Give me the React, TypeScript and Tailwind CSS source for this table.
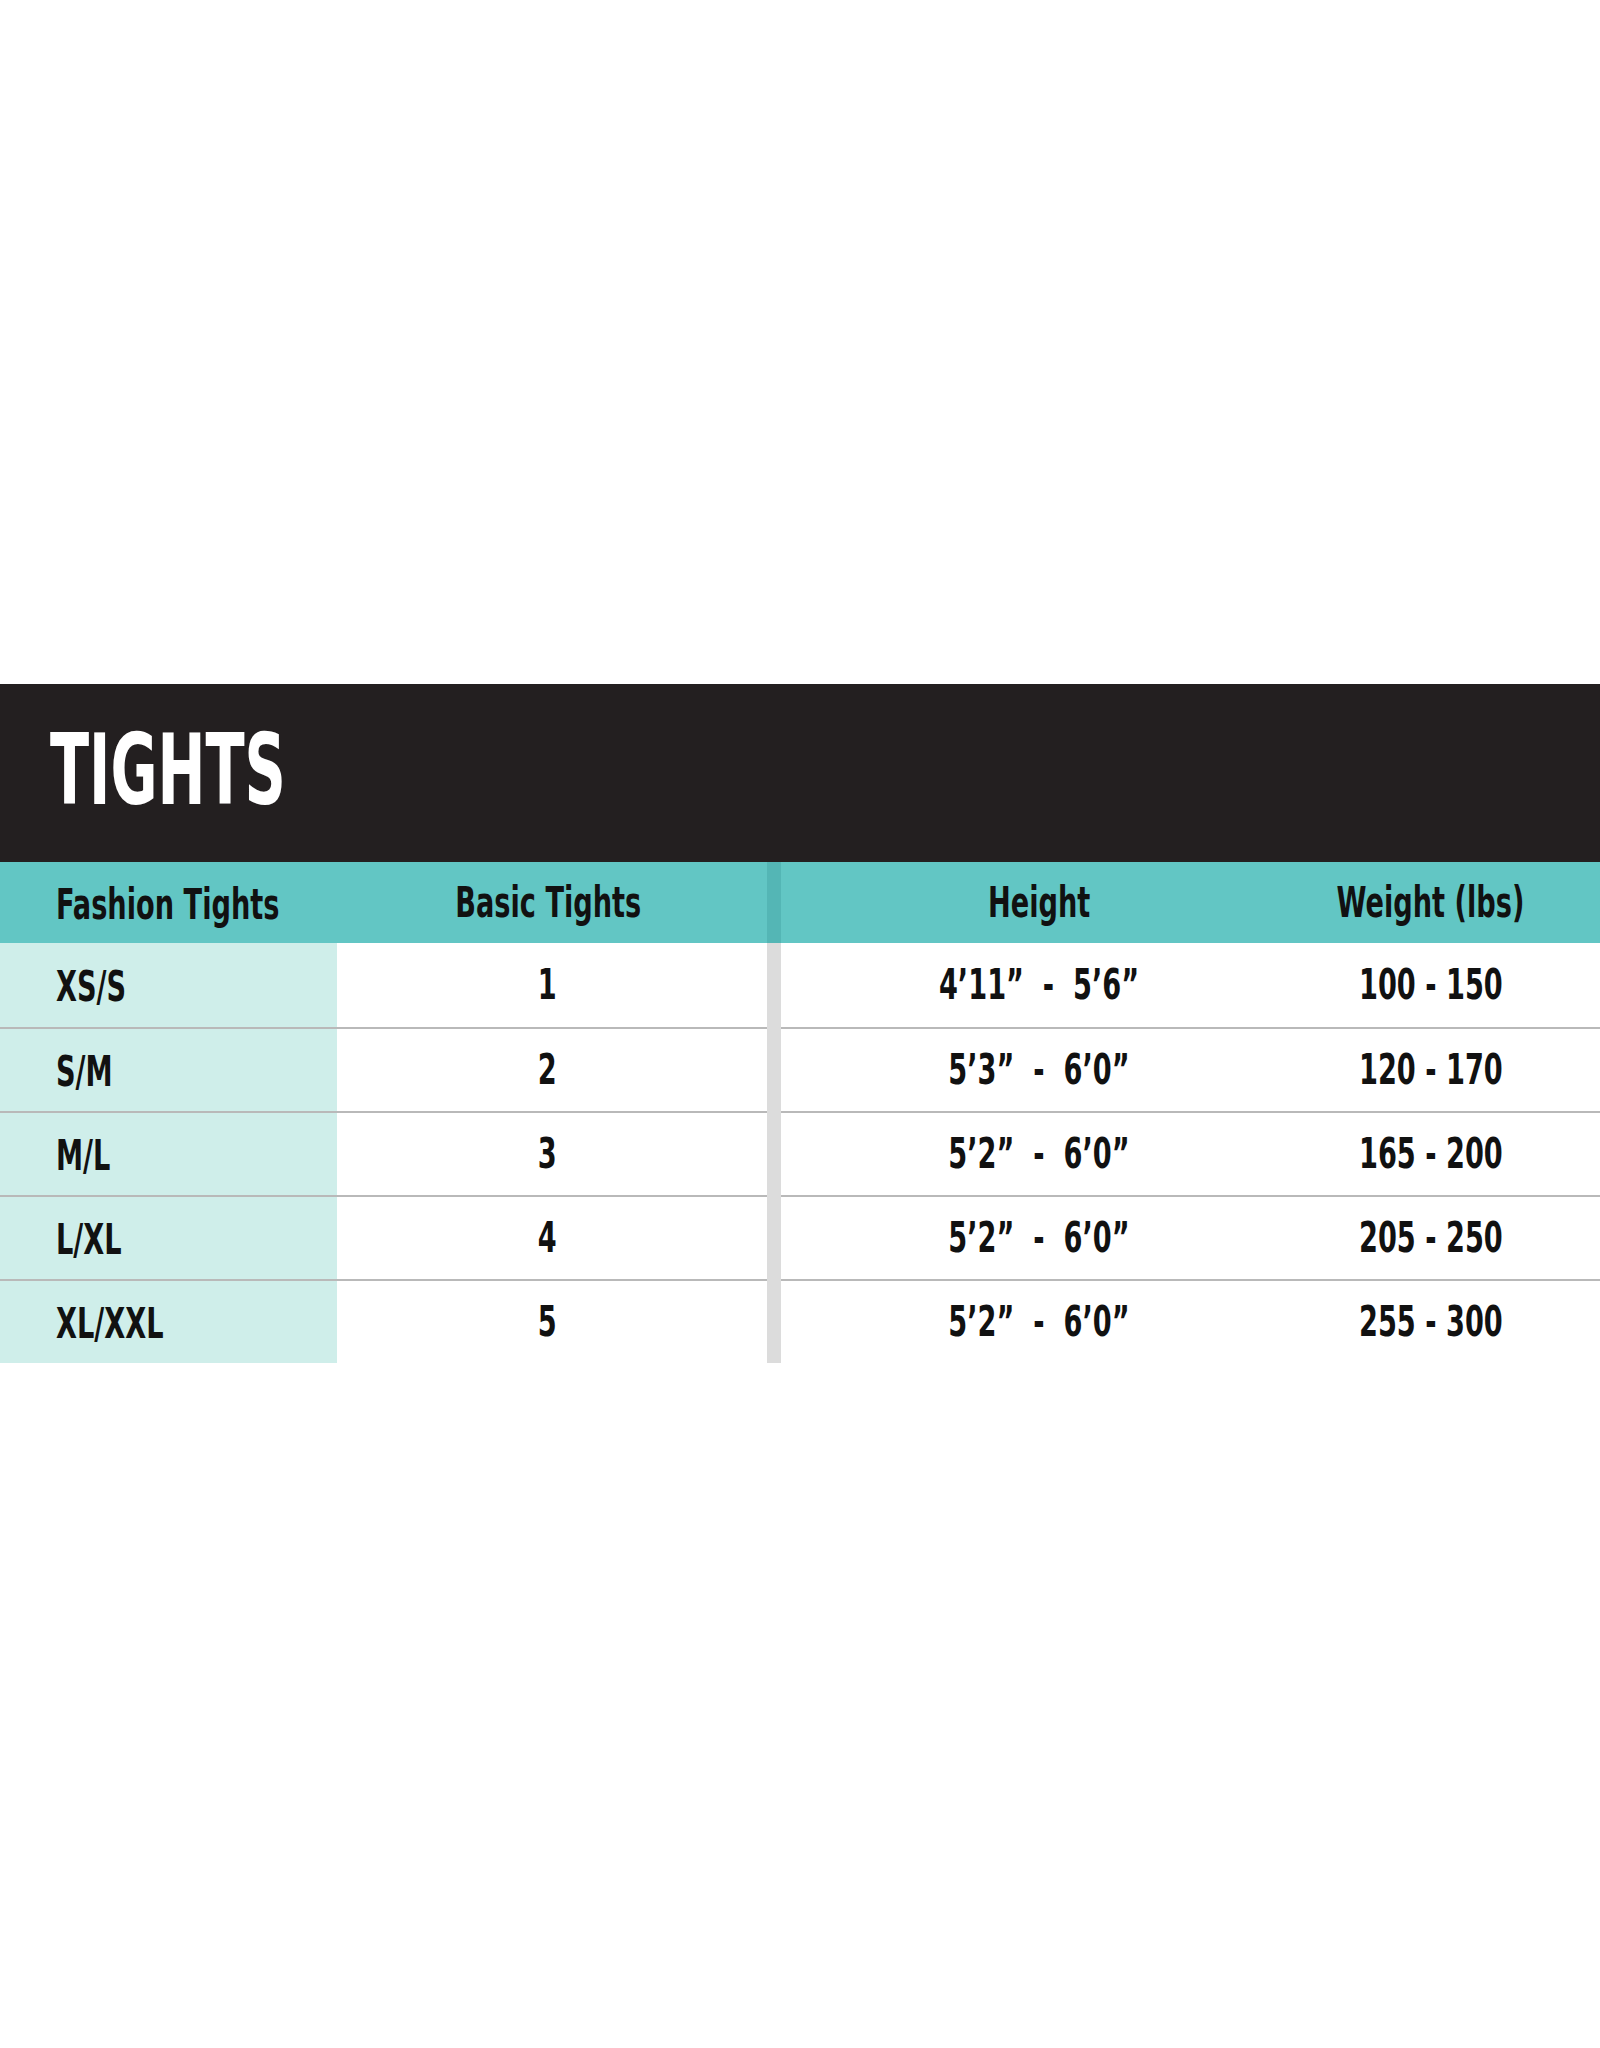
const rows = [
  { fashion: "XS/S", basic: "1", height: "4’11”  -  5’6”", weight: "100 - 150" },
  { fashion: "S/M", basic: "2", height: "5’3”  -  6’0”", weight: "120 - 170" },
  { fashion: "M/L", basic: "3", height: "5’2”  -  6’0”", weight: "165 - 200" },
  { fashion: "L/XL", basic: "4", height: "5’2”  -  6’0”", weight: "205 - 250" },
  { fashion: "XL/XXL", basic: "5", height: "5’2”  -  6’0”", weight: "255 - 300" },
];

const font = "font-['Liberation_Sans_Narrow','DejaVu_Sans_Condensed','Liberation_Sans',sans-serif]";

// the chart uses a tight condensed face; squeeze the available one to match
function Narrow({ children, left }: { children: React.ReactNode; left?: boolean }) {
  return (
    <span
      className={`inline-block whitespace-pre scale-x-[0.72] ${left ? "origin-left" : "origin-center"}`}
    >
      {children}
    </span>
  );
}

export default function App() {
  return (
    <div className={`min-h-[2048px] w-[1600px] bg-white ${font}`}>
      <div className="h-[684px]" />

      <div className="flex h-[178px] items-center bg-[#231f20] pb-[6px] pl-[50px]">
        <h1 className="inline-block origin-left scale-x-[0.65] text-[98px] font-bold leading-none text-white">
          TIGHTS
        </h1>
      </div>

      <div className="grid grid-cols-[337px_430px_14px_516px_1fr] text-[42px] font-bold leading-none text-[#111]">
        <div className="flex h-[81px] items-center bg-[#62c6c4] pl-[56px] pt-[4px]">
          <Narrow left>Fashion Tights</Narrow>
        </div>
        <div className="flex h-[81px] items-center justify-center bg-[#62c6c4] pr-[8px]">
          <Narrow>Basic Tights</Narrow>
        </div>
        <div className="h-[81px] bg-[#54b6b5]" />
        <div className="flex h-[81px] items-center justify-center bg-[#62c6c4]">
          <Narrow>Height</Narrow>
        </div>
        <div className="flex h-[81px] items-center justify-center bg-[#62c6c4] pr-[36px]">
          <Narrow>Weight (lbs)</Narrow>
        </div>

        {rows.map((row, i) => {
          const border = i > 0 ? "border-t-2 border-[#b9b9b9]" : "";
          return (
            <div key={row.fashion} className="contents">
              <div className={`flex h-[84px] items-center bg-[#cfeeea] pl-[56px] pt-[4px] ${border}`}>
                <Narrow left>{row.fashion}</Narrow>
              </div>
              <div className={`flex h-[84px] items-center justify-center pr-[10px] ${border}`}>
                <Narrow>{row.basic}</Narrow>
              </div>
              <div className="h-[84px] bg-[#dcdcdc]" />
              <div className={`flex h-[84px] items-center justify-center ${border}`}>
                <Narrow>{row.height}</Narrow>
              </div>
              <div className={`flex h-[84px] items-center justify-center pr-[36px] ${border}`}>
                <Narrow>{row.weight}</Narrow>
              </div>
            </div>
          );
        })}
      </div>
    </div>
  );
}
